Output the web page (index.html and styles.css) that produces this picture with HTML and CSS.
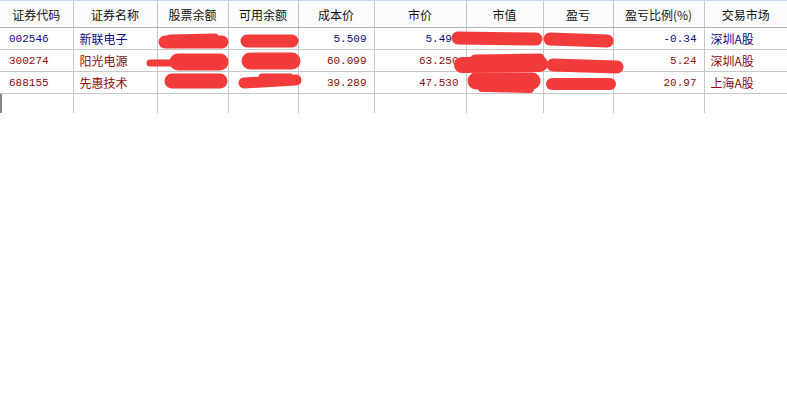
FILE: index.html
```html
<!DOCTYPE html>
<html lang="zh-CN">
<head>
    <meta charset="UTF-8">
    <title>持仓</title>
    <link rel="stylesheet" href="styles.css">
</head>
<body>
    <div class="top-strip"></div>
    <div class="grid-wrap">
        <table class="holdings">
            <colgroup>
                <col class="w-code">
                <col class="w-name">
                <col class="w-qty">
                <col class="w-avail">
                <col class="w-cost">
                <col class="w-price">
                <col class="w-value">
                <col class="w-pnl">
                <col class="w-ratio">
                <col class="w-market">
            </colgroup>
            <thead>
                <tr>
                    <th>证券代码</th>
                    <th>证券名称</th>
                    <th>股票余额</th>
                    <th>可用余额</th>
                    <th>成本价</th>
                    <th>市价</th>
                    <th>市值</th>
                    <th>盈亏</th>
                    <th>盈亏比例(%)</th>
                    <th>交易市场</th>
                </tr>
            </thead>
            <tbody>
                <tr class="loss">
                    <td class="code">002546</td>
                    <td class="name">新联电子</td>
                    <td class="num"></td>
                    <td class="num"></td>
                    <td class="num">5.509</td>
                    <td class="num">5.490</td>
                    <td class="num"></td>
                    <td class="num"></td>
                    <td class="num">-0.34</td>
                    <td class="name">深圳A股</td>
                </tr>
                <tr class="gain">
                    <td class="code">300274</td>
                    <td class="name">阳光电源</td>
                    <td class="num"></td>
                    <td class="num"></td>
                    <td class="num">60.099</td>
                    <td class="num">63.250</td>
                    <td class="num"></td>
                    <td class="num"></td>
                    <td class="num">5.24</td>
                    <td class="name">深圳A股</td>
                </tr>
                <tr class="gain">
                    <td class="code">688155</td>
                    <td class="name">先惠技术</td>
                    <td class="num"></td>
                    <td class="num"></td>
                    <td class="num">39.289</td>
                    <td class="num">47.530</td>
                    <td class="num"></td>
                    <td class="num"></td>
                    <td class="num">20.97</td>
                    <td class="name">上海A股</td>
                </tr>
                <tr class="blank">
                    <td></td><td></td><td></td><td></td><td></td>
                    <td></td><td></td><td></td><td></td><td></td>
                </tr>
            </tbody>
        </table>

        <!-- redaction scribbles over the hidden amounts -->
        <svg class="scribble" width="787" height="112" viewBox="0 0 787 112">
            <g stroke="#f23b3b" stroke-linecap="round" fill="none">
                <path d="M165 41 L222 41" stroke-width="13"/>
                <path d="M170 37 L215 36" stroke-width="7"/>
                <path d="M150 62 L172 62" stroke-width="7"/>
                <path d="M178 61 L220 61" stroke-width="17"/>
                <path d="M172 80 L220 80" stroke-width="15"/>
                <path d="M247 40 L292 40" stroke-width="13"/>
                <path d="M250 60 L292 60" stroke-width="17"/>
                <path d="M244 82 L296 79" stroke-width="11"/>
                <path d="M262 76 L290 76" stroke-width="7"/>
                <path d="M458 37 L536 38" stroke-width="13"/>
                <path d="M550 38 L607 40" stroke-width="13"/>
                <path d="M462 64 L540 63" stroke-width="16"/>
                <path d="M475 58 L540 57" stroke-width="9"/>
                <path d="M553 64 L617 66" stroke-width="13"/>
                <path d="M476 80 L532 80" stroke-width="17"/>
                <path d="M482 87 L530 88" stroke-width="8"/>
                <path d="M552 83 L610 83" stroke-width="12"/>
            </g>
        </svg>
    </div>
</body>
</html>
```

FILE: styles.css
```css
body {
    margin: 0;
    background: #ffffff;
    font-family: "Noto Sans CJK SC", "DejaVu Sans", sans-serif;
}
.top-strip {
    height: 1px;
    background: #c8d6ea;
}
.grid-wrap {
    position: relative;
    width: 787px;
}
.holdings {
    border-collapse: collapse;
    table-layout: fixed;
    width: 787px;
    font-size: 12px;
}
.w-code { width: 73px; }
.w-name { width: 84px; }
.w-qty { width: 71px; }
.w-avail { width: 70px; }
.w-cost { width: 76px; }
.w-price { width: 92px; }
.w-value { width: 77px; }
.w-pnl { width: 70px; }
.w-ratio { width: 91px; }
.w-market { width: 83px; }
.holdings th {
    height: 26px;
    padding: 0;
    font-weight: normal;
    color: #111;
    background: #fbfbfb;
    border-left: 1px solid #c4c4c4;
    border-bottom: 1px solid #b4b4b4;
    text-align: center;
}
.holdings th:first-child,
.holdings td:first-child {
    border-left: none;
}
.holdings td {
    height: 21px;
    padding: 0 7px;
    border-left: 1px solid #c8c8c8;
    border-bottom: 1px solid #c8c8c8;
    white-space: nowrap;
    overflow: hidden;
}
.holdings td.code {
    padding-left: 9px;
    font-family: "Liberation Mono", monospace;
    font-size: 11px;
}
.holdings td.num {
    text-align: right;
    font-family: "Liberation Mono", monospace;
    font-size: 11px;
}
.holdings td.name {
    padding-left: 6px;
}
.loss td {
    color: #0a0a80;
}
.gain td {
    color: #8a0a0a;
}
.holdings .blank td {
    height: 19px;
    border-bottom: none;
}
.holdings .blank td:first-child {
    box-shadow: inset 2px 0 0 #8a8a8a;
}
.scribble {
    position: absolute;
    left: 0;
    top: 0;
    pointer-events: none;
}
```
